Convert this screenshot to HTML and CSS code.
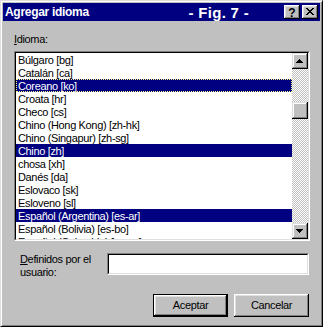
FILE: index.html
```html
<!DOCTYPE html>
<html>
<head>
<meta charset="utf-8">
<link rel="stylesheet" href="styles.css">
</head>
<body>
<div class="window">
  <div class="titlebar">
    <span class="title">Agregar idioma</span>
    <span class="fig">- Fig. 7 -</span>
    <span class="tbtn help">?</span>
    <span class="tbtn close">
      <svg width="16" height="14" viewBox="0 0 16 14" shape-rendering="crispEdges">
        <path fill="#000" d="M4 3h2v1h1v1h2V4h1V3h2v1h-1v1h-1v1h-1v1h1v1h1v1h1v1h-2V9H9V8H7v1H6v1H4V9h1V8h1V7h1V6H6V5H5V4H4z"/>
      </svg>
    </span>
  </div>
  <div class="content">
    <div class="label"><u>I</u>dioma:</div>
    <div class="listbox">
      <div class="listinner">
        <ul class="items">
          <li>Búlgaro [bg]</li>
          <li>Catalán [ca]</li>
          <li class="sel focus">Coreano [ko]</li>
          <li>Croata [hr]</li>
          <li>Checo [cs]</li>
          <li>Chino (Hong Kong) [zh-hk]</li>
          <li>Chino (Singapur) [zh-sg]</li>
          <li class="sel">Chino [zh]</li>
          <li>chosa [xh]</li>
          <li>Danés [da]</li>
          <li>Eslovaco [sk]</li>
          <li>Esloveno [sl]</li>
          <li class="sel">Español (Argentina) [es-ar]</li>
          <li>Español (Bolivia) [es-bo]</li>
          <li>Español (Colombia) [es-co]</li>
        </ul>
        <div class="scrollbar">
          <div class="sbtn">
            <svg width="16" height="16" viewBox="0 0 16 16" shape-rendering="crispEdges"><path fill="#000" d="M7 6h1v1h1v1h1v1h1v1H4V9h1V8h1V7h1z"/></svg>
          </div>
          <div class="track"><div class="thumb"></div></div>
          <div class="sbtn">
            <svg width="16" height="16" viewBox="0 0 16 16" shape-rendering="crispEdges"><path fill="#000" d="M4 6h7v1h-1v1h-1v1h-1v1H7V9H6V8H5V7H4z"/></svg>
          </div>
        </div>
      </div>
    </div>
    <div class="userrow">
      <div class="ulabel"><u>D</u>efinidos por el<br>usuario:</div>
      <div class="input"><div class="input-inner"></div></div>
    </div>
    <div class="buttons">
      <div class="btn default"><span class="btn-face">Aceptar</span></div>
      <div class="btn"><span class="btn-face">Cancelar</span></div>
    </div>
  </div>
</div>
</body>
</html>
```

FILE: styles.css
```css
* { box-sizing: border-box; }
html, body { margin: 0; padding: 0; background: #c0c0c0; }
body {
  font-family: "Liberation Sans", Arial, sans-serif;
  font-size: 11px;
  letter-spacing: -0.35px;
  color: #000;
}
.window {
  width: 323px;
  height: 327px;
  background: #c0c0c0;
  border: 1px solid;
  border-color: #dfdfdf #000 #000 #dfdfdf;
  box-shadow: inset 1px 1px #fff, inset -1px -1px #808080;
  padding: 2px;
  display: flex;
  flex-direction: column;
}
.titlebar {
  height: 18px;
  background: #000080;
  color: #fff;
  display: flex;
  align-items: center;
  padding-left: 2px;
  flex-shrink: 0;
}
.title {
  font-weight: bold;
  font-size: 12px;
  letter-spacing: -0.3px;
}
.fig {
  font-weight: bold;
  font-size: 15px;
  letter-spacing: 0.3px;
  margin-left: auto;
  margin-right: 35px;
}
.tbtn {
  width: 16px;
  height: 14px;
  background: #c0c0c0;
  box-shadow: inset -1px -1px #000, inset 1px 1px #fff, inset -2px -2px #808080, inset 2px 2px #dfdfdf;
  color: #000;
  display: flex;
  align-items: center;
  justify-content: center;
}
.tbtn svg { display: block; }
.help {
  font-weight: bold;
  font-size: 12px;
  letter-spacing: 0;
  line-height: 14px;
  padding-top: 1px;
}
.close { margin-left: 2px; margin-right: 2px; }
.content {
  flex: 1;
  display: flex;
  flex-direction: column;
}
.label {
  margin: 12px 0 0 11px;
  line-height: 13px;
  height: 13px;
}
.listbox {
  margin: 5px 0 0 11px;
  width: 296px;
  height: 190px;
  border: 1px solid;
  border-color: #808080 #fff #fff #808080;
}
.listinner {
  height: 100%;
  border: 1px solid;
  border-color: #000 #dfdfdf #dfdfdf #000;
  display: flex;
  background: #fff;
}
.items {
  list-style: none;
  margin: 0;
  padding: 0;
  flex: 1;
  overflow: hidden;
}
.items li {
  height: 13px;
  line-height: 12px;
  padding: 1px 0 0 2px;
  white-space: nowrap;
}
.items li.sel {
  background: #000080;
  color: #fff;
}
.items li.focus {
  outline: 1px dotted #ffff7f;
  outline-offset: -1px;
}
.scrollbar {
  width: 16px;
  display: flex;
  flex-direction: column;
}
.sbtn {
  width: 16px;
  height: 16px;
  background: #c0c0c0;
  box-shadow: inset -1px -1px #000, inset 1px 1px #dfdfdf, inset -2px -2px #808080, inset 2px 2px #fff;
}
.sbtn svg { display: block; }
.track {
  flex: 1;
  background-image: conic-gradient(#fff 25%, #c0c0c0 0 50%, #fff 0 75%, #c0c0c0 0);
  background-size: 2px 2px;
}
.thumb {
  margin-top: 33px;
  width: 16px;
  height: 17px;
  background: #c0c0c0;
  box-shadow: inset -1px -1px #000, inset 1px 1px #dfdfdf, inset -2px -2px #808080, inset 2px 2px #fff;
}
.userrow {
  margin-top: 12px;
  display: flex;
}
.ulabel {
  margin-left: 17px;
  line-height: 13px;
}
.ulabel u, .label u { text-decoration-thickness: 1px; }
.input {
  margin-left: auto;
  margin-right: 11px;
  width: 202px;
  height: 22px;
  border: 1px solid;
  border-color: #808080 #fff #fff #808080;
}
.input-inner {
  height: 100%;
  border: 1px solid;
  border-color: #000 #dfdfdf #dfdfdf #000;
  background: #fff;
}
.buttons {
  margin-top: 15px;
  margin-right: 11px;
  display: flex;
  justify-content: flex-end;
  gap: 6px;
}
.btn {
  width: 75px;
  height: 23px;
  background: #c0c0c0;
  box-shadow: inset -1px -1px #000, inset 1px 1px #fff, inset -2px -2px #808080, inset 2px 2px #dfdfdf;
  display: flex;
}
.btn.default {
  border: 1px solid #000;
  box-shadow: inset -1px -1px #000, inset 1px 1px #fff, inset -2px -2px #808080, inset 2px 2px #dfdfdf;
}
.btn-face {
  flex: 1;
  display: flex;
  align-items: center;
  justify-content: center;
  padding-bottom: 1px;
}
```
